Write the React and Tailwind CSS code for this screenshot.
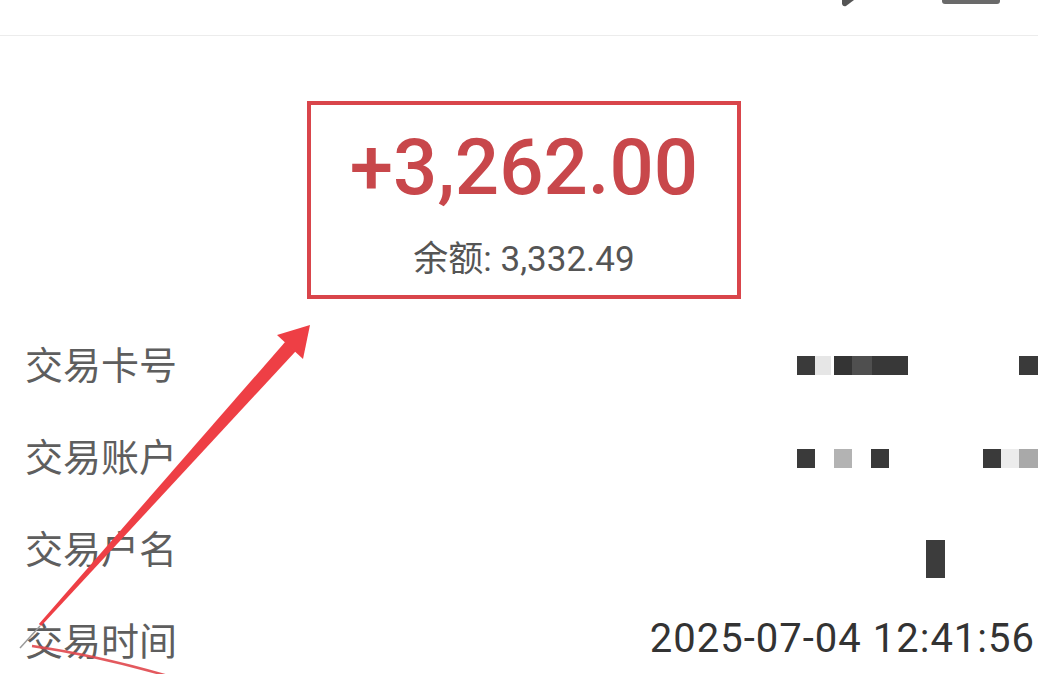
import React from "react";

const cjk = { fontFamily: '"Noto Sans CJK SC", "Noto Sans", sans-serif' };
const num = { fontFamily: 'Roboto, "Noto Sans CJK SC", sans-serif' };

function Arrow() {
  return (
    <svg
      className="absolute left-0 top-0 pointer-events-none"
      width="1038"
      height="674"
      viewBox="0 0 1038 674"
    >
      {/* tail scribble */}
      <path d="M40 626 L20 648" stroke="#9a9a9a" strokeWidth="1.5" fill="none" />
      <path d="M32 646 Q 95 655 168 676" stroke="#e0474c" strokeWidth="2.5" fill="none" opacity="0.9" />
      {/* shaft, tapered */}
      <polygon points="38.9,624 41.1,626 295.7,351.2 285.3,341.8" fill="#ee3f45" />
      {/* head */}
      <polygon points="310,325 277,335 303,359" fill="#ee3f45" />
    </svg>
  );
}

function Row({ label, children }) {
  return (
    <div className="h-[92px] flex items-center justify-between pl-[25px]">
      <span className="text-[38px] leading-none text-[#5e5e5e]" style={cjk}>
        {label}
      </span>
      {children}
    </div>
  );
}

export default function App() {
  return (
    <div className="relative w-[1038px] h-[674px] overflow-hidden bg-white">
      {/* top bar, mostly cut off */}
      <div className="h-[36px] border-b border-[#ececec] flex justify-end items-start">
        <svg width="22" height="8" viewBox="0 0 22 8" className="mr-[80px]">
          <path d="M2 0 L14 0 L6 6 Q3 7 2 4 Z" fill="#555" />
        </svg>
        <div className="w-[58px] h-[4px] rounded-b-[3px] bg-[#6a6a6a] mr-[38px]" />
      </div>

      {/* amount box */}
      <div className="ml-[307px] mt-[65px] w-[434px] h-[198px] border-4 border-[#d9454b] flex flex-col items-center">
        <div className="mt-[24px] text-[78px] leading-none font-medium text-[#c8474b]" style={num}>
          +3,262.00
        </div>
        <div className="mt-[31px] text-[35px] leading-none text-[#555]" style={num}>
          <span style={cjk}>余额</span>: 3,332.49
        </div>
      </div>

      <div className="mt-[18px]">
        <Row label="交易卡号">
          <div className="flex h-[19px] mb-[-5px]">
            <div className="w-[18px] bg-[#3a3a3a]" />
            <div className="w-[16px] bg-[#e6e6e6]" />
            <div className="w-[3px]" />
            <div className="w-[18px] bg-[#343434]" />
            <div className="w-[20px] bg-[#4f4f4f]" />
            <div className="w-[36px] bg-[#383838]" />
            <div className="w-[111px]" />
            <div className="w-[19px] bg-[#3a3a3a]" />
          </div>
        </Row>
        <Row label="交易账户">
          <div className="flex h-[19px] mt-[6px]">
            <div className="w-[18px] bg-[#3a3a3a]" />
            <div className="w-[19px]" />
            <div className="w-[18px] bg-[#b3b3b3]" />
            <div className="w-[19px]" />
            <div className="w-[18px] bg-[#383838]" />
            <div className="w-[94px]" />
            <div className="w-[18px] bg-[#3a3a3a]" />
            <div className="w-[18px] bg-[#ececec]" />
            <div className="w-[19px] bg-[#a9a9a9]" />
          </div>
        </Row>
        <Row label="交易户名">
          <div className="w-[19px] h-[38px] bg-[#3c3c3c] mr-[93px] mt-[24px]" />
        </Row>
        <Row label="交易时间">
          <span className="text-[40px] leading-none text-[#333] tracking-[1px] mr-[3px]" style={num}>
            2025-07-04 12:41:56
          </span>
        </Row>
      </div>

      <Arrow />
    </div>
  );
}
